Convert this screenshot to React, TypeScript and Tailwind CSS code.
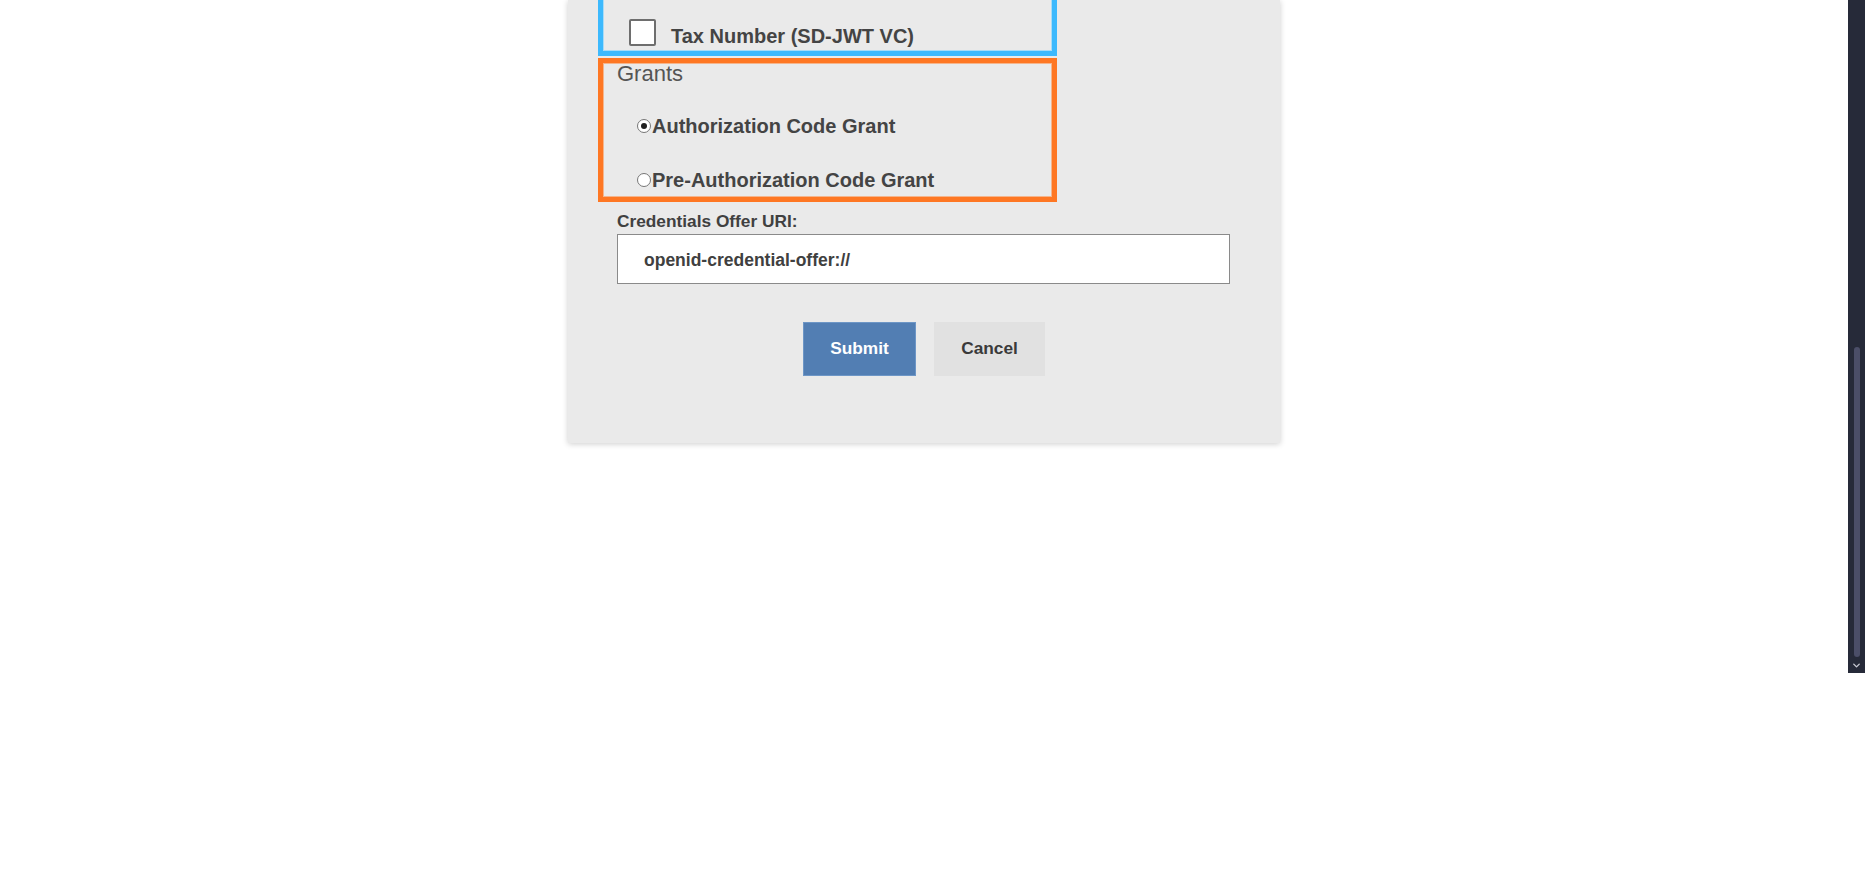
import { ChevronDown } from "lucide-react";

const Radio = ({ checked }: { checked?: boolean }) => (
  <span className="mt-[4px] flex h-[14px] w-[14px] shrink-0 items-center justify-center rounded-full border border-[#767676] bg-white">
    {checked && <span className="h-[6px] w-[6px] rounded-full bg-[#1f1f1f]" />}
  </span>
);

const grants = [
  { label: "Authorization Code Grant", checked: true },
  { label: "Pre-Authorization Code Grant", checked: false },
];

const App = () => {
  return (
    <div className="flex min-h-[892px] bg-white font-['Liberation_Sans',Arial,sans-serif]">
      <main className="flex-1">
        {/* Form panel, scrolled so its top is off screen */}
        <div className="mx-auto w-[712px] bg-[#eaeaea] pb-[67px] shadow-[0_1px_6px_rgba(0,0,0,0.2)]">
          {/* Credentials (blue) */}
          <div className="ml-[30px] h-[56px] w-[459px] border-x-[5px] border-b-[5px] border-[#3db9fd] pt-[19px] shadow-[inset_1px_0_0_#a9dcf7,inset_-1px_0_0_#a9dcf7,inset_0_-1px_0_#a9dcf7]">
            <div className="flex items-start pl-[26px]">
              <span className="h-[27px] w-[27px] shrink-0 rounded-[2px] border-2 border-[#6e6e6e] bg-white" />
              <span className="ml-[15px] mt-[6px] text-[20px] font-bold leading-[23px] text-[#444]">
                Tax Number (SD-JWT VC)
              </span>
            </div>
          </div>

          {/* Grants (orange) */}
          <div className="ml-[30px] mt-[2px] h-[144px] w-[459px] border-[5px] border-[#fe7723] shadow-[inset_0_0_0_1px_#f5b58c]">
            <div className="pl-[14px] text-[22px] leading-[22px] text-[#555]">Grants</div>
            <div className="mt-[30px] flex flex-col gap-[31px] pl-[34px]">
              {grants.map((g) => (
                <label
                  key={g.label}
                  className="flex h-[23px] items-start gap-[1px] text-[20px] font-bold leading-[23px] text-[#444]"
                >
                  <Radio checked={g.checked} />
                  <span>{g.label}</span>
                </label>
              ))}
            </div>
          </div>

          {/* Offer URI */}
          <div className="ml-[49px] mt-[9px] text-[17.3px] font-bold leading-[20px] text-[#404040]">
            Credentials Offer URI:
          </div>
          <div className="ml-[49px] mt-[3px] h-[50px] w-[613px] border border-[#8a8a8a] bg-white pl-[26px] pt-[15px] text-[17.5px] font-bold leading-[20px] text-[#404040]">
            openid-credential-offer://
          </div>

          {/* Actions */}
          <div className="mt-[38px] flex justify-center gap-[18px]">
            <button className="h-[54px] w-[113px] border border-[#6d96c6] bg-[#527eb3] text-[17.3px] font-bold text-white">
              Submit
            </button>
            <button className="h-[54px] w-[111px] bg-[#e1e1e1] text-[17.3px] font-bold text-[#3a3a3a]">
              Cancel
            </button>
          </div>
        </div>
      </main>

      {/* Scrollbar */}
      <div className="flex h-[673px] w-[17px] flex-col items-center bg-[#262a39] pt-[347px]">
        <div className="h-[310px] w-[6px] rounded-full bg-[#4b4e68]" />
        <ChevronDown className="mt-[3px] text-[#c9cad3]" size={11} strokeWidth={3} />
      </div>
    </div>
  );
};

export default App;
